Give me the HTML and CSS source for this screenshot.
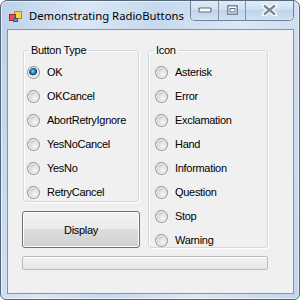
FILE: index.html
```html
<!DOCTYPE html>
<html lang="en">
<head>
  <meta charset="UTF-8">
  <title>Demonstrating RadioButtons</title>
  <link rel="stylesheet" href="styles.css">
</head>
<body>
  <div class="window">
    <div class="titlebar">
      <svg class="app-icon" width="13" height="11" viewBox="0 0 13 11">
        <rect x="5.5" y="0.5" width="7" height="7" fill="#f7d34a" stroke="#b58b1c"/>
        <rect x="0.5" y="3.5" width="6" height="6" fill="#e2574c" stroke="#9b2a22"/>
        <rect x="4.5" y="7.5" width="4" height="3" fill="#5a8fd8" stroke="#2d5a9a"/>
      </svg>
      <span class="title">Demonstrating RadioButtons</span>
      <div class="caption-buttons">
        <span class="cap-btn cap-min">
          <svg width="14" height="6" viewBox="0 0 14 6"><rect x="1" y="1" width="12" height="4" rx="1" fill="#fff" stroke="#5d6c7e" stroke-width="1.2"/></svg>
        </span>
        <span class="cap-btn cap-max">
          <svg width="11" height="10" viewBox="0 0 11 10"><rect x="0.8" y="0.8" width="9.4" height="8.4" fill="#fff" stroke="#5d6c7e" stroke-width="1.2"/><rect x="3" y="3.5" width="5" height="3.5" fill="#fff" stroke="#5d6c7e"/></svg>
        </span>
        <span class="cap-btn cap-close">
          <svg width="15" height="12" viewBox="0 0 15 12"><path d="M2 1.5 L13 10.5 M13 1.5 L2 10.5" stroke="#fff" stroke-width="5" stroke-linecap="round"/><path d="M2 1.5 L13 10.5 M13 1.5 L2 10.5" stroke="#7a8898" stroke-width="2.4"/></svg>
        </span>
      </div>
    </div>

    <div class="client">
      <div class="columns">
        <div class="left-col">
          <fieldset class="group group-type">
            <legend>Button Type</legend>
            <div class="radio-list">
              <label class="radio-row"><span class="radio checked"></span>OK</label>
              <label class="radio-row"><span class="radio"></span>OKCancel</label>
              <label class="radio-row"><span class="radio"></span>AbortRetryIgnore</label>
              <label class="radio-row"><span class="radio"></span>YesNoCancel</label>
              <label class="radio-row"><span class="radio"></span>YesNo</label>
              <label class="radio-row"><span class="radio"></span>RetryCancel</label>
            </div>
          </fieldset>
          <button class="display-btn">Display</button>
        </div>

        <fieldset class="group group-icon">
          <legend>Icon</legend>
          <div class="radio-list">
            <label class="radio-row"><span class="radio"></span>Asterisk</label>
            <label class="radio-row"><span class="radio"></span>Error</label>
            <label class="radio-row"><span class="radio"></span>Exclamation</label>
            <label class="radio-row"><span class="radio"></span>Hand</label>
            <label class="radio-row"><span class="radio"></span>Information</label>
            <label class="radio-row"><span class="radio"></span>Question</label>
            <label class="radio-row"><span class="radio"></span>Stop</label>
            <label class="radio-row"><span class="radio"></span>Warning</label>
          </div>
        </fieldset>
      </div>
      <div class="progress"></div>
    </div>
  </div>
</body>
</html>
```

FILE: styles.css
```css
body {
  margin: 0;
  background: #fff;
  font-family: 'Liberation Sans', Arial, sans-serif;
}
.window {
  width: 300px;
  height: 300px;
  box-sizing: border-box;
  border: 1px solid #56677a;
  border-radius: 7px 7px 6px 6px;
  background: linear-gradient(100deg, #bcd2ea 0%, #d9e7f5 25%, #c6d9ee 45%, #dbe8f5 70%, #c2d6ec 100%);
  box-shadow: inset 0 0 0 1px rgba(255,255,255,0.55);
  display: flex;
  flex-direction: column;
  overflow: hidden;
}
.titlebar {
  height: 28px;
  display: flex;
  align-items: flex-start;
  flex-shrink: 0;
}
.app-icon {
  margin: 10px 0 0 8px;
}
.title {
  font-family: 'Noto Sans', sans-serif;
  font-size: 11.3px;
  line-height: 14px;
  color: #000;
  margin: 8px 0 0 7px;
  white-space: nowrap;
}
.caption-buttons {
  margin-left: auto;
  margin-right: 5px;
  margin-top: -1px;
  display: flex;
  height: 20px;
  border: 1px solid #6f819a;
  border-top: none;
  border-radius: 0 0 5px 5px;
  overflow: hidden;
  box-shadow: inset 0 0 0 1px rgba(255,255,255,0.6);
}
.cap-btn {
  display: flex;
  align-items: center;
  justify-content: center;
  background: linear-gradient(#e4edf8, #cfdff0 50%, #bed3ec 51%, #d3e2f3);
}
.cap-min {
  width: 27px;
  border-right: 1px solid #7f90a6;
}
.cap-max {
  width: 26px;
  border-right: 1px solid #7f90a6;
}
.cap-close {
  width: 47px;
}
.client {
  flex: 1;
  margin: 0 5px 5px 6px;
  border: 1px solid #8594a5;
  background: #f0f0f0;
  padding: 14px 0 0 14px;
  font-size: 11px;
  letter-spacing: -0.3px;
  color: #000;
}
.columns {
  display: flex;
  gap: 8px;
  align-items: flex-start;
}
.left-col {
  display: flex;
  flex-direction: column;
  width: 118px;
}
.group {
  margin: 0;
  padding: 0;
  border: 1px solid #d0dae1;
  border-radius: 3px;
  box-shadow: inset 1px 1px 0 #fff, 1px 1px 0 #fff;
}
.group legend {
  margin-left: 5px;
  padding: 0 2px;
  font-size: 11px;
  line-height: 13px;
}
.group-type {
  width: 116px;
  margin-left: 1px;
  box-sizing: border-box;
}
.group-icon {
  width: 120px;
  box-sizing: border-box;
}
.radio-list {
  display: flex;
  flex-direction: column;
  gap: 10px;
  padding-top: 8px;
}
.group-type .radio-list {
  padding-left: 3px;
  padding-bottom: 2px;
}
.group-icon .radio-list {
  padding-left: 6px;
  padding-bottom: 0;
}
.radio-row {
  display: flex;
  align-items: center;
  height: 14px;
  line-height: 14px;
  white-space: nowrap;
}
.radio {
  width: 13px;
  height: 13px;
  box-sizing: border-box;
  border-radius: 50%;
  border: 1px solid #8e8f8f;
  background: radial-gradient(circle at 60% 65%, #f7f7f7 0, #e6e6e6 3px, #cfcfcf 6px);
  box-shadow: inset 0 0 0 1px #f4f4f4;
  margin-right: 7px;
  flex-shrink: 0;
}
.radio.checked {
  background: radial-gradient(circle at 45% 40%, #9fe3fb 0, #3a9ccd 1.5px, #155b82 3.2px, #0d3f5e 3.8px, #f5f5f5 4.3px, #e2e2e2 6px);
}
.display-btn {
  margin-top: 9px;
  width: 118px;
  height: 37px;
  border: 1px solid #707070;
  border-radius: 3px;
  background: linear-gradient(#f2f2f2 0%, #ebebeb 49%, #dddddd 50%, #cfcfcf 100%);
  box-shadow: inset 0 0 0 1px #fcfcfc;
  font-family: 'Liberation Sans', Arial, sans-serif;
  font-size: 11px;
  letter-spacing: -0.3px;
  color: #000;
  padding: 0;
}
.progress {
  margin-top: 8px;
  width: 246px;
  height: 14px;
  box-sizing: border-box;
  border: 1px solid #bcbcbc;
  border-radius: 2px;
  background: linear-gradient(#f3f3f3, #e6e6e6);
  box-shadow: inset 0 1px 0 #fff;
}
```
